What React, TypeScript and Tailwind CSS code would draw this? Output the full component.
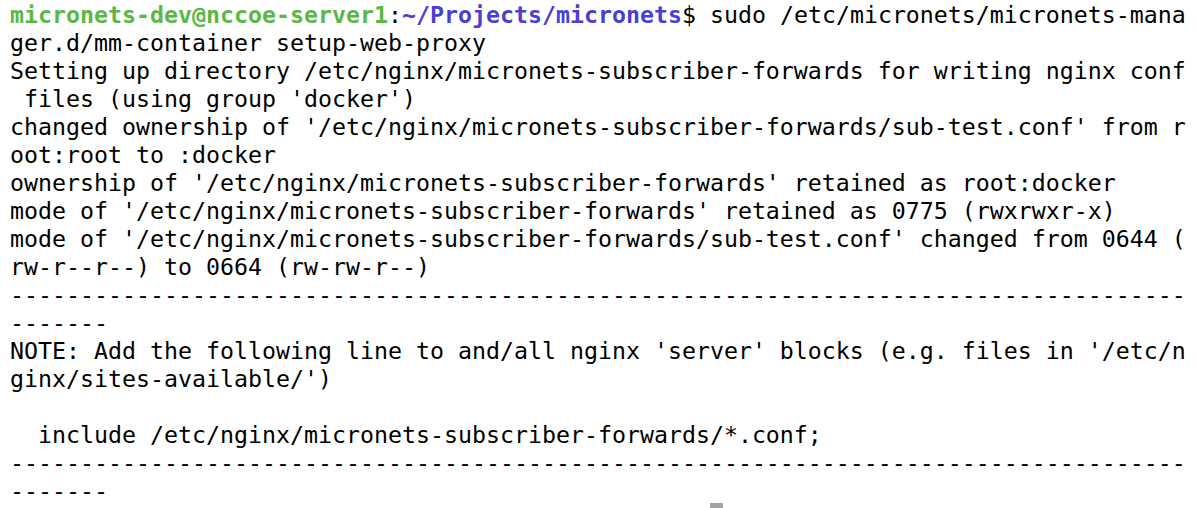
const PROMPT_USER = 'micronets-dev@nccoe-server1';
const PROMPT_PATH = '~/Projects/micronets';

const DASHES = '-'.repeat(84);

const output = [
  'ger.d/mm-container setup-web-proxy',
  'Setting up directory /etc/nginx/micronets-subscriber-forwards for writing nginx conf',
  " files (using group 'docker')",
  "changed ownership of '/etc/nginx/micronets-subscriber-forwards/sub-test.conf' from r",
  'oot:root to :docker',
  "ownership of '/etc/nginx/micronets-subscriber-forwards' retained as root:docker",
  "mode of '/etc/nginx/micronets-subscriber-forwards' retained as 0775 (rwxrwxr-x)",
  "mode of '/etc/nginx/micronets-subscriber-forwards/sub-test.conf' changed from 0644 (",
  'rw-r--r--) to 0664 (rw-rw-r--)',
  DASHES,
  '-------',
  "NOTE: Add the following line to and/all nginx 'server' blocks (e.g. files in '/etc/n",
  "ginx/sites-available/')",
  '',
  '  include /etc/nginx/micronets-subscriber-forwards/*.conf;',
  DASHES,
  '-------',
];

function Prompt({ cmd, cursor }: { cmd?: string; cursor?: boolean }) {
  return (
    <div className="h-[28px] leading-[28px] flex">
      <span className="font-bold text-[#5cb842]">{PROMPT_USER}</span>
      <span>:</span>
      <span className="font-bold text-[#4a3fd2]">{PROMPT_PATH}</span>
      <span>$ </span>
      {cmd && <span>{cmd}</span>}
      {cursor && <span className="inline-block w-[13px] h-[28px] mt-[-2px] bg-[#a3a3a3]" />}
    </div>
  );
}

export default function App() {
  return (
    <div
      className="w-[1196px] h-[508px] overflow-hidden bg-white text-black pl-[10px] pt-[1px] whitespace-pre text-[23.25px]"
      style={{ fontFamily: '"DejaVu Sans Mono", "Liberation Mono", monospace' }}
    >
      <Prompt cmd="sudo /etc/micronets/micronets-mana" />
      {output.map((line, i) => (
        <div key={i} className="h-[28px] leading-[28px]">
          {line}
        </div>
      ))}
      <Prompt cursor />
    </div>
  );
}
